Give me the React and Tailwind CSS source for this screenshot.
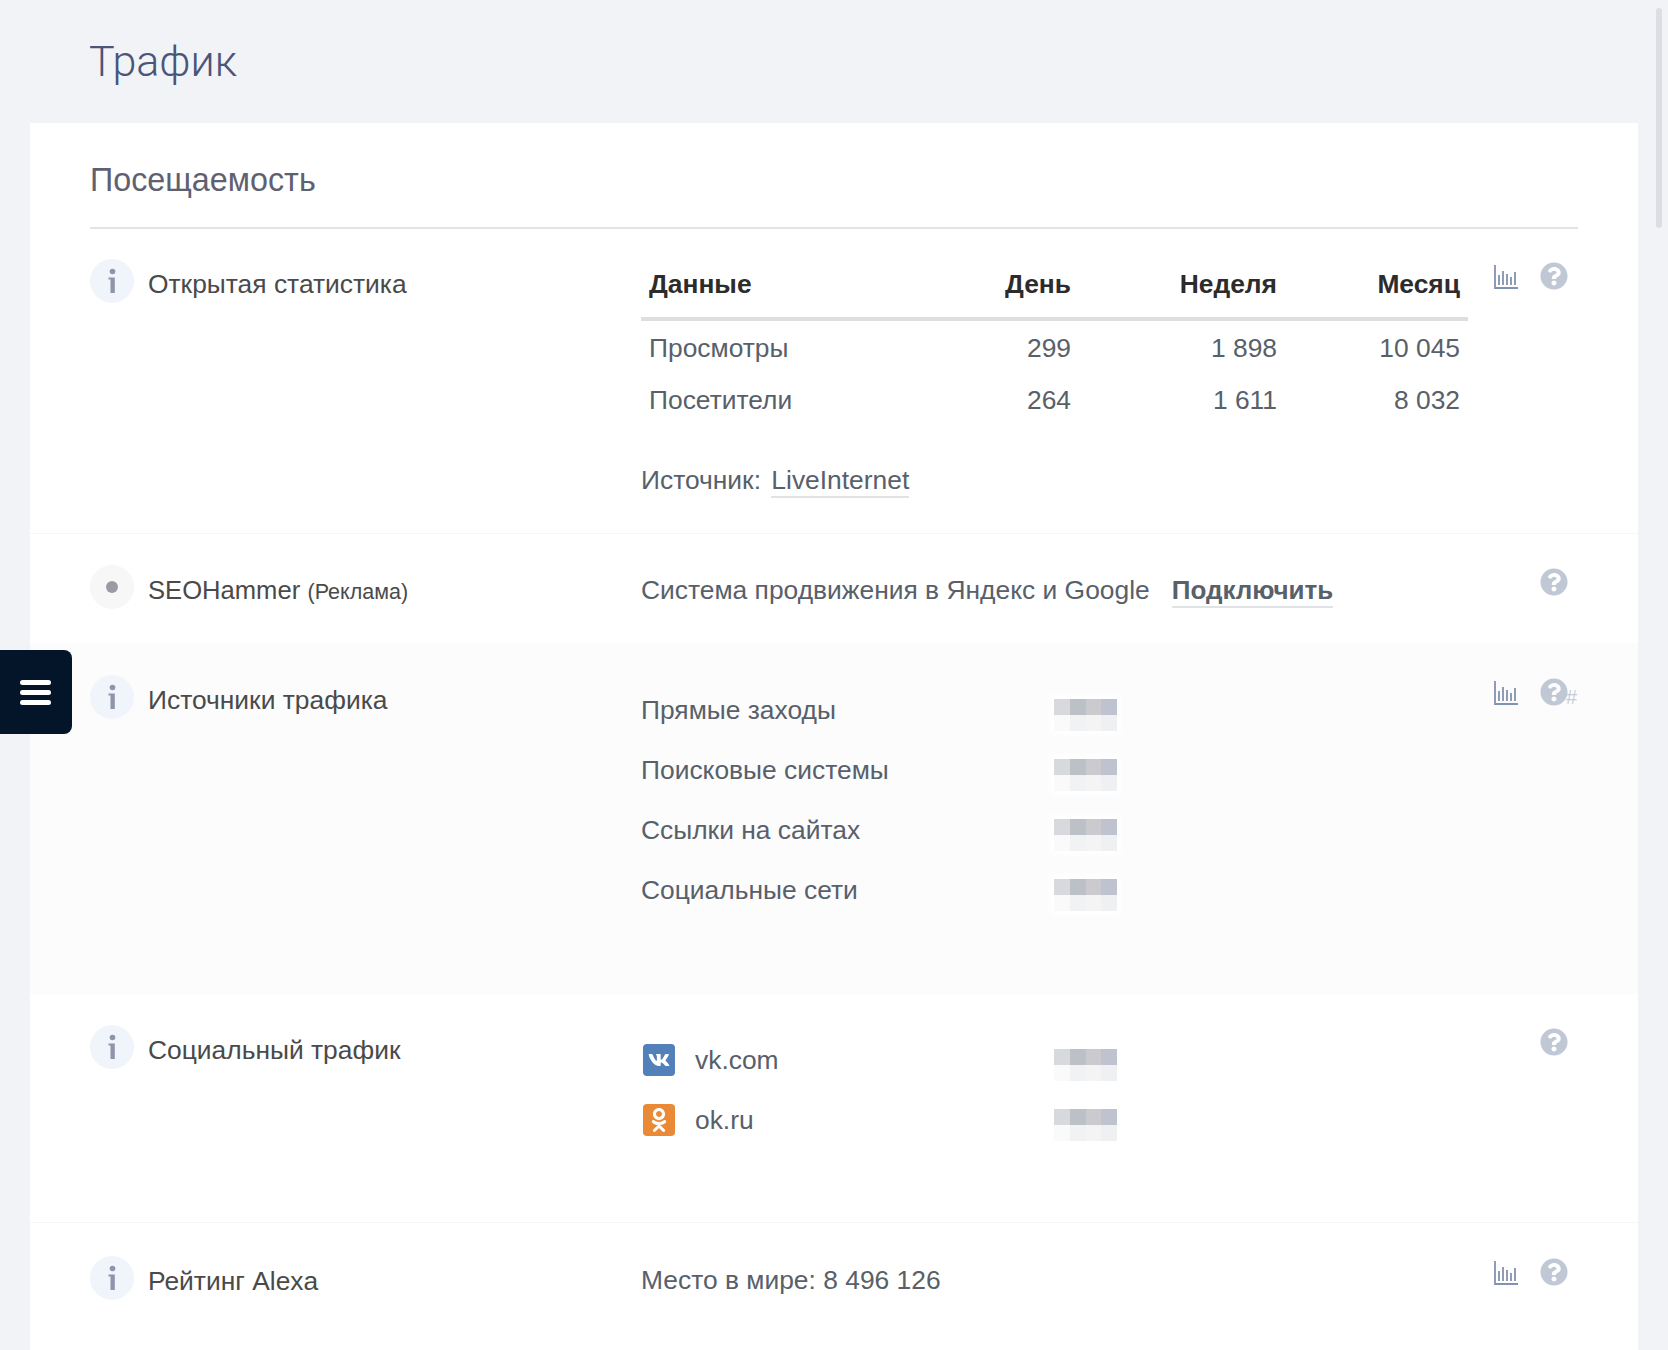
import React from "react";
import { FaQuestionCircle, FaVk, FaOdnoklassniki } from "react-icons/fa";

const ChartIcon = () => (
  <svg width="24" height="24" viewBox="0 0 24 24" className="mb-[1px] shrink-0">
    <path d="M1 0v23h23" fill="none" stroke="#8392ae" strokeWidth="1.8" />
    <path
      d="M5 10v10M9 6v14M13 9v11M17 12v8M21 7v13"
      fill="none"
      stroke="#8392ae"
      strokeWidth="1.8"
    />
  </svg>
);

const Help = ({ hash }) => (
  <div className="relative ml-[22px] h-[28px] w-[28px] shrink-0">
    <FaQuestionCircle className="text-[28px] text-[#c0c8d6]" />
    {hash && (
      <span className="absolute left-[26px] top-[8px] text-[20px] leading-[22px] text-[#c5ccd9]">
        #
      </span>
    )}
  </div>
);

const InfoDot = () => (
  <div className="flex h-[44px] w-[44px] shrink-0 items-center justify-center rounded-full bg-[#f0f4fb]">
    <svg width="12" height="28" viewBox="0 0 12 28">
      <circle cx="6.5" cy="4.5" r="2.8" fill="#8f94aa" />
      <path d="M2.5 10.5H8.8V26H4.5V12.5H2.5Z" fill="#8f94aa" />
    </svg>
  </div>
);

const GrayDot = () => (
  <div className="flex h-[44px] w-[44px] shrink-0 items-center justify-center rounded-full bg-[#f7f7f8]">
    <div className="h-[12px] w-[12px] rounded-full bg-[#9b9ca3]"></div>
  </div>
);

const Blurred = () => (
  <div className="mt-[8px] grid h-[32px] w-[63px] grid-cols-4 grid-rows-2 shadow-[0_0_6px_4px_#ffffff]">
    <div className="bg-[#d8d9dc]"></div>
    <div className="bg-[#bcc1c7]"></div>
    <div className="bg-[#cbcacf]"></div>
    <div className="bg-[#bfc3cf]"></div>
    <div className="bg-[#fafafa]"></div>
    <div className="bg-[#f1f2f3]"></div>
    <div className="bg-[#f4f4f5]"></div>
    <div className="bg-[#eef0f2]"></div>
  </div>
);

const Row = ({ icon, label, actions, className, children }) => (
  <div className={"flex items-start px-[60px] " + className}>
    <div className="flex w-[551px] shrink-0 items-start gap-[14px]">
      {icon}
      <div className="mt-[9px] text-[26.4px] leading-[32px] text-[#4a4a4a]">{label}</div>
    </div>
    <div className="min-w-0 flex-1 text-[26.4px] text-[#58606a]">{children}</div>
    <div className="flex w-[84px] shrink-0 items-end justify-end pr-[10px] pt-[3px]">
      {actions}
    </div>
  </div>
);

const traffic = ["Прямые заходы", "Поисковые системы", "Ссылки на сайтах", "Социальные сети"];

const App = () => {
  return (
    <div className="relative h-[1350px] w-[1668px] overflow-hidden bg-[#f1f3f7] font-['Liberation_Sans',sans-serif]">
      <h1 className="pl-[89px] pt-[33px] font-['Roboto',sans-serif] text-[43px] font-light leading-[56px] text-[#4a5578]">
        Трафик
      </h1>

      <div className="ml-[30px] mt-[34px] h-[1227px] w-[1608px] bg-white">
        <div className="mx-[60px] h-[106px] border-b-2 border-[#e2e3e5] pt-[37px]">
          <h2 className="text-[32.3px] leading-[40px] text-[#5f6070]">Посещаемость</h2>
        </div>

        <Row
          icon={<InfoDot />}
          label="Открытая статистика"
          className="h-[305px] border-b border-[#f6f6f7] pt-[30px]"
          actions={
            <>
              <ChartIcon />
              <Help />
            </>
          }
        >
          <div className="-mt-[8px] w-[827px]">
            <div className="grid grid-cols-[298px_140px_206px_183px] border-b-4 border-[#dedede] text-[#2c2c2c]">
              <div className="h-[66px] pl-[8px] font-bold leading-[66px]">Данные</div>
              <div className="h-[66px] pr-[8px] text-right font-bold leading-[66px]">День</div>
              <div className="h-[66px] pr-[8px] text-right font-bold leading-[66px]">Неделя</div>
              <div className="h-[66px] pr-[8px] text-right font-bold leading-[66px]">Месяц</div>
            </div>
            <div className="grid grid-cols-[298px_140px_206px_183px] pt-[1px] leading-[52px]">
              <div className="pl-[8px]">Просмотры</div>
              <div className="pr-[8px] text-right">299</div>
              <div className="pr-[8px] text-right">1 898</div>
              <div className="pr-[8px] text-right">10 045</div>
              <div className="pl-[8px]">Посетители</div>
              <div className="pr-[8px] text-right">264</div>
              <div className="pr-[8px] text-right">1 611</div>
              <div className="pr-[8px] text-right">8 032</div>
            </div>
            <div className="mt-[36px] leading-[36px]">
              Источник:{" "}
              <span className="ml-[3px] inline-block border-b-2 border-[#dfe3e6] leading-[31px]">LiveInternet</span>
            </div>
          </div>
        </Row>

        <Row
          icon={<GrayDot />}
          label={
            <>
              <span className="text-[25.6px]">SEOHammer</span> <span className="text-[21.5px]">(Реклама)</span>
            </>
          }
          className="h-[109px] pt-[31px]"
          actions={<Help />}
        >
          <div className="mt-[10px] flex items-start leading-[31px]">
            <span>Система продвижения в Яндекс и Google</span>
            <span className="ml-[22px] inline-block border-b-2 border-[#dfe3e6] text-[26px] font-bold">Подключить</span>
          </div>
        </Row>

        <Row
          icon={<InfoDot />}
          label="Источники трафика"
          className="h-[351px] bg-[#fcfcfd] pt-[32px]"
          actions={
            <>
              <ChartIcon />
              <Help hash />
            </>
          }
        >
          <div className="mt-[6px] flex flex-col">
            {traffic.map((item) => (
              <div key={item} className="flex h-[60px] items-center">
                <div className="w-[413px]">{item}</div>
                <Blurred />
              </div>
            ))}
          </div>
        </Row>

        <Row
          icon={<InfoDot />}
          label="Социальный трафик"
          className="h-[229px] border-b border-[#f6f6f7] pt-[31px]"
          actions={<Help />}
        >
          <div className="mt-[6px] flex flex-col">
            <div className="flex h-[60px] items-center">
              <div className="flex w-[413px] items-center">
                <div className="ml-[2px] -mt-[2px] flex h-[32px] w-[32px] items-center justify-center rounded-[4px] bg-[#5181b8] text-[22px] text-white">
                  <FaVk />
                </div>
                <span className="ml-[20px]">vk.com</span>
              </div>
              <Blurred />
            </div>
            <div className="flex h-[60px] items-center">
              <div className="flex w-[413px] items-center">
                <div className="ml-[2px] -mt-[2px] flex h-[32px] w-[32px] items-center justify-center rounded-[4px] bg-[#ea8a36] text-[24px] text-white">
                  <FaOdnoklassniki />
                </div>
                <span className="ml-[20px]">ok.ru</span>
              </div>
              <Blurred />
            </div>
          </div>
        </Row>

        <Row
          icon={<InfoDot />}
          label="Рейтинг Alexa"
          className="pt-[33px]"
          actions={
            <div className="-mt-[1px] flex items-end">
              <ChartIcon />
              <Help />
            </div>
          }
        >
          <div className="mt-[8px] leading-[32px]">Место в мире: 8 496 126</div>
        </Row>
      </div>

      <button className="absolute left-0 top-[650px] flex h-[84px] w-[72px] flex-col items-center justify-center gap-[5px] rounded-r-[8px] bg-[#04152a] pr-[1px]">
        <span className="h-[5px] w-[31px] rounded-full bg-white"></span>
        <span className="h-[5px] w-[31px] rounded-full bg-white"></span>
        <span className="h-[5px] w-[31px] rounded-full bg-white"></span>
      </button>

      <div className="absolute left-[1656px] top-[8px] h-[220px] w-[6px] rounded-full bg-[#dcdee3]"></div>
    </div>
  );
};

export default App;
